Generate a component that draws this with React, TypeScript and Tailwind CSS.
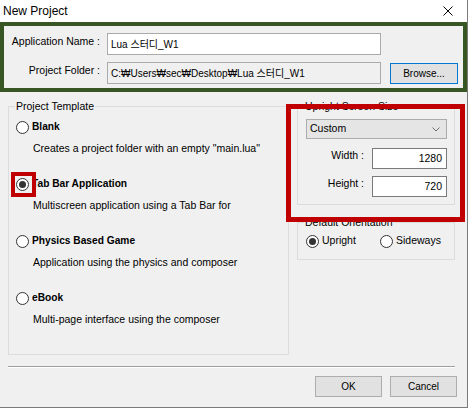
import React from 'react';

const font = { fontFamily: '"Liberation Sans", "Noto Sans CJK KR", sans-serif' };

/**
 * Classic Windows radio button
 */
function Radio({ checked = false }: { checked?: boolean }) {
  return (
    <span className="w-[13px] h-[13px] shrink-0 rounded-full border border-[#333333] bg-white flex items-center justify-center">
      {checked && <span className="w-[7px] h-[7px] rounded-full bg-[#333333]" />}
    </span>
  );
}

interface TemplateItemProps {
  title: string;
  description: string;
  checked?: boolean;
  marked?: boolean;
}

function TemplateItem({ title, description, checked, marked }: TemplateItemProps) {
  return (
    <div className="flex flex-col gap-[5px]">
      <div className="flex items-center gap-[3px] h-[16px]">
        <span className="relative flex">
          <Radio checked={checked} />
          {marked && (
            <span className="absolute left-[-5px] top-[-6px] w-[25px] h-[25px] border-[4px] border-[#c00000]" />
          )}
        </span>
        <span className="text-[10.2px] leading-[16px] font-bold text-black">{title}</span>
      </div>
      <div className="pl-[17px] h-[16px] text-[10.5px] leading-[16px] text-black">{description}</div>
    </div>
  );
}

function Button({ label, focused = false, className = '' }: { label: string; focused?: boolean; className?: string }) {
  return (
    <button
      className={`h-[21px] w-[67px] bg-[#e1e1e1] border text-[10px] text-black flex items-center justify-center ${
        focused ? 'border-[#0078d7]' : 'border-[#adadad]'
      } ${className}`}
    >
      {label}
    </button>
  );
}

function Legend({ children }: { children: React.ReactNode }) {
  return <legend className="ml-[6px] px-[1px] text-[10.5px] leading-[14px] text-black">{children}</legend>;
}

/**
 * Main App Component
 */
export default function App() {
  return (
    <div className="w-[470px] h-[410px] bg-white" style={font}>
      <div className="w-[468px] h-[408px] border-r border-b border-[#7a7a7a] bg-[#f0f0f0] flex flex-col">
        {/* Title bar */}
        <div className="h-[22px] bg-white flex items-center justify-between pl-[3px] pr-[14px]">
          <span className="text-[12px] text-black">New Project</span>
          <svg width="10" height="10" viewBox="0 0 10 10">
            <path d="M0.5 0.5 L9.5 9.5 M9.5 0.5 L0.5 9.5" stroke="#000" strokeWidth="1" />
          </svg>
        </div>

        {/* Name / folder */}
        <div className="h-[70px] border-[4px] border-[#385623] flex flex-col gap-[7px] pt-[7px]">
          <div className="flex items-center">
            <span className="w-[96px] text-right text-[10.5px] text-black pb-[5px]">Application Name :</span>
            <div className="ml-[7px] w-[274px] h-[22px] bg-white border border-[#ababab] flex items-center px-[3px] text-[10px] text-black">
              Lua 스터디_W1
            </div>
          </div>
          <div className="flex items-center">
            <span className="w-[96px] text-right text-[10.5px] text-black pb-[5px]">Project Folder :</span>
            <div className="ml-[7px] w-[274px] h-[22px] bg-[#f0f0f0] border border-[#ababab] flex items-center px-[3px] text-[10px] text-black">
              C:₩Users₩sec₩Desktop₩Lua 스터디_W1
            </div>
            <Button label="Browse..." focused className="ml-[9px] w-[68px]" />
          </div>
        </div>

        <div className="flex flex-col pl-[8px] pr-[12px]">
          <div className="flex gap-[8px] mt-[7px]">
            {/* Project template */}
            <fieldset className="w-[281px] h-[256px] border border-[#dcdcdc]">
              <Legend>Project Template</Legend>
              <div className="flex flex-col gap-[20px] pt-[6px] pl-[7px]">
                <TemplateItem title="Blank" description={'Creates a project folder with an empty "main.lua"'} />
                <TemplateItem
                  title="Tab Bar Application"
                  description="Multiscreen application using a Tab Bar for"
                  checked
                  marked
                />
                <TemplateItem title="Physics Based Game" description="Application using the physics and composer" />
                <TemplateItem title="eBook" description="Multi-page interface using the composer" />
              </div>
            </fieldset>

            {/* Screen options */}
            <div className="relative w-[158px] flex flex-col">
              <fieldset className="h-[106px] border border-[#dcdcdc]">
                <Legend>Upright Screen Size</Legend>
                <div className="flex flex-col pt-[6px] pl-[8px] pr-[7px]">
                  <div className="h-[20px] bg-[#e5e5e5] border border-[#acacac] flex items-center justify-between pl-[3px] pr-[6px] text-[10.5px] text-black">
                    <span>Custom</span>
                    <svg width="8" height="5" viewBox="0 0 8 5">
                      <path d="M0.5 0.5 L4 4 L7.5 0.5" fill="none" stroke="#707070" strokeWidth="1" />
                    </svg>
                  </div>
                  <div className="flex items-start justify-end gap-[8px] mt-[9px]">
                    <span className="text-[10.5px] leading-[14px] text-black">Width :</span>
                    <div className="w-[75px] h-[21px] bg-white border border-[#7a7a7a] flex items-center justify-end px-[4px] text-[10.5px] text-black">
                      1280
                    </div>
                  </div>
                  <div className="flex items-start justify-end gap-[8px] mt-[7px]">
                    <span className="text-[10.5px] leading-[14px] text-black">Height :</span>
                    <div className="w-[75px] h-[21px] bg-white border border-[#7a7a7a] flex items-center justify-end px-[4px] text-[10.5px] text-black">
                      720
                    </div>
                  </div>
                </div>
              </fieldset>

              <fieldset className="mt-[10px] h-[45px] border border-[#dcdcdc]">
                <Legend>Default Orientation</Legend>
                <div className="flex items-center pt-[5px] pl-[8px] h-[19px]">
                  <div className="w-[74px] flex items-center gap-[3px]">
                    <Radio checked />
                    <span className="text-[10.5px] text-black">Upright</span>
                  </div>
                  <div className="flex items-center gap-[3px]">
                    <Radio />
                    <span className="text-[10.5px] text-black">Sideways</span>
                  </div>
                </div>
              </fieldset>

              <span className="absolute left-[-11px] top-[5px] w-[179px] h-[118px] border-[5px] border-[#c00000]" />
            </div>
          </div>

          <div className="mt-[11px] border-t border-b border-t-[#a0a0a0] border-b-white" />

          <div className="flex justify-end gap-[8px] mt-[8px] mr-[-2px]">
            <Button label="OK" />
            <Button label="Cancel" />
          </div>
        </div>
      </div>
    </div>
  );
}
